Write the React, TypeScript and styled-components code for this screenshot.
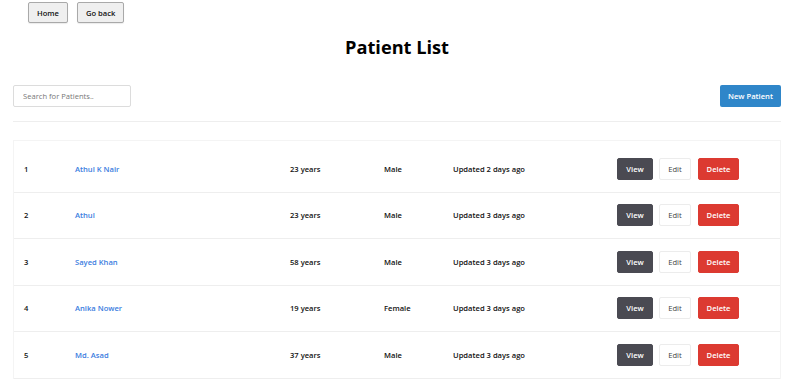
import React from "react";
import styled, { createGlobalStyle } from "styled-components";

const Global = createGlobalStyle`
  html, body { margin: 0; padding: 0; background: #fff; }
  body { font-family: "Open Sans", "Noto Sans", sans-serif; color: #111; }
  * { box-sizing: border-box; }
`;

const Page = styled.div`
  width: 768px;
  margin-left: 13px;
`;

const NavBar = styled.nav`
  display: flex;
  gap: 9px;
  padding: 2px 0 0 15px;
`;

const NavButton = styled.button`
  height: 21px;
  padding: 0 8px;
  background: #efefef;
  border: 1px solid #a9a9a9;
  border-radius: 2px;
  font-family: "Open Sans", sans-serif;
  font-size: 7.6px;
  font-weight: 600;
  color: #111;
  box-shadow: 0 1px 1px rgba(0,0,0,0.08);
`;

const Title = styled.h1`
  margin: 11px 0 0;
  text-align: center;
  font-size: 18.2px;
  font-weight: 700;
  line-height: 26px;
  color: #000;
`;

const Toolbar = styled.div`
  display: flex;
  justify-content: space-between;
  align-items: center;
  margin-top: 25px;
  padding-bottom: 14px;
  border-bottom: 1px solid #eeeeee;
`;

const Search = styled.input`
  width: 118px;
  height: 22px;
  padding: 0 9px;
  border: 1px solid #dcdcdc;
  border-radius: 2px;
  font-family: "Open Sans", sans-serif;
  font-size: 7.6px;
  color: #333;
  outline: none;
  &::placeholder { color: #777; }
`;

const PrimaryButton = styled.button`
  height: 22px;
  width: 61px;
  background: #2f86c9;
  color: #fff;
  border: none;
  border-radius: 2px;
  font-family: "Open Sans", sans-serif;
  font-size: 7.6px;
  font-weight: 600;
`;

const Table = styled.div`
  margin-top: 18px;
  border: 1px solid #f4f4f4;
  border-bottom: none;
  padding-top: 5px;
`;

const Row = styled.div`
  display: grid;
  grid-template-columns: 51px 215px 94px 69px 164px 1fr;
  align-items: center;
  height: 46.5px;
  padding-left: 10px;
  border-bottom: 1px solid #eeeeee;
  font-size: 7.6px;
  font-weight: 600;
  color: #111;
`;

const Cell = styled.div`
  white-space: nowrap;
`;

const NameLink = styled.a`
  color: #3b7de0;
  text-decoration: none;
  font-weight: 600;
`;

const Actions = styled.div`
  display: flex;
  align-items: center;
  gap: 6px;
`;

const ActionButton = styled.button<{ $variant: "view" | "edit" | "delete" }>`
  height: 22px;
  width: ${(p) => (p.$variant === "view" ? "36px" : p.$variant === "edit" ? "32px" : "41px")};
  margin-left: ${(p) => (p.$variant === "delete" ? "1px" : "0")};
  border-radius: 2px;
  font-family: "Open Sans", sans-serif;
  font-size: 7.6px;
  font-weight: ${(p) => (p.$variant === "edit" ? 400 : 600)};
  background: ${(p) => (p.$variant === "view" ? "#4a4a52" : p.$variant === "edit" ? "#fff" : "#dc3a31")};
  color: ${(p) => (p.$variant === "edit" ? "#444" : "#fff")};
  border: 1px solid ${(p) => (p.$variant === "view" ? "#4a4a52" : p.$variant === "edit" ? "#ececec" : "#dc3a31")};
`;

const patients = [
  { id: 1, name: "Athul K Nair", age: "23 years", gender: "Male", updated: "Updated 2 days ago" },
  { id: 2, name: "Athul", age: "23 years", gender: "Male", updated: "Updated 3 days ago" },
  { id: 3, name: "Sayed Khan", age: "58 years", gender: "Male", updated: "Updated 3 days ago" },
  { id: 4, name: "Anika Nower", age: "19 years", gender: "Female", updated: "Updated 3 days ago" },
  { id: 5, name: "Md. Asad", age: "37 years", gender: "Male", updated: "Updated 3 days ago" },
];

export default function App() {
  return (
    <>
      <Global />
      <Page>
        <NavBar>
          <NavButton>Home</NavButton>
          <NavButton>Go back</NavButton>
        </NavBar>
        <Title>Patient List</Title>
        <Toolbar>
          <Search placeholder="Search for Patients.." />
          <PrimaryButton>New Patient</PrimaryButton>
        </Toolbar>
        <Table>
          {patients.map((p) => (
            <Row key={p.id}>
              <Cell>{p.id}</Cell>
              <Cell><NameLink href="#">{p.name}</NameLink></Cell>
              <Cell>{p.age}</Cell>
              <Cell>{p.gender}</Cell>
              <Cell>{p.updated}</Cell>
              <Actions>
                <ActionButton $variant="view">View</ActionButton>
                <ActionButton $variant="edit">Edit</ActionButton>
                <ActionButton $variant="delete">Delete</ActionButton>
              </Actions>
            </Row>
          ))}
        </Table>
      </Page>
    </>
  );
}
